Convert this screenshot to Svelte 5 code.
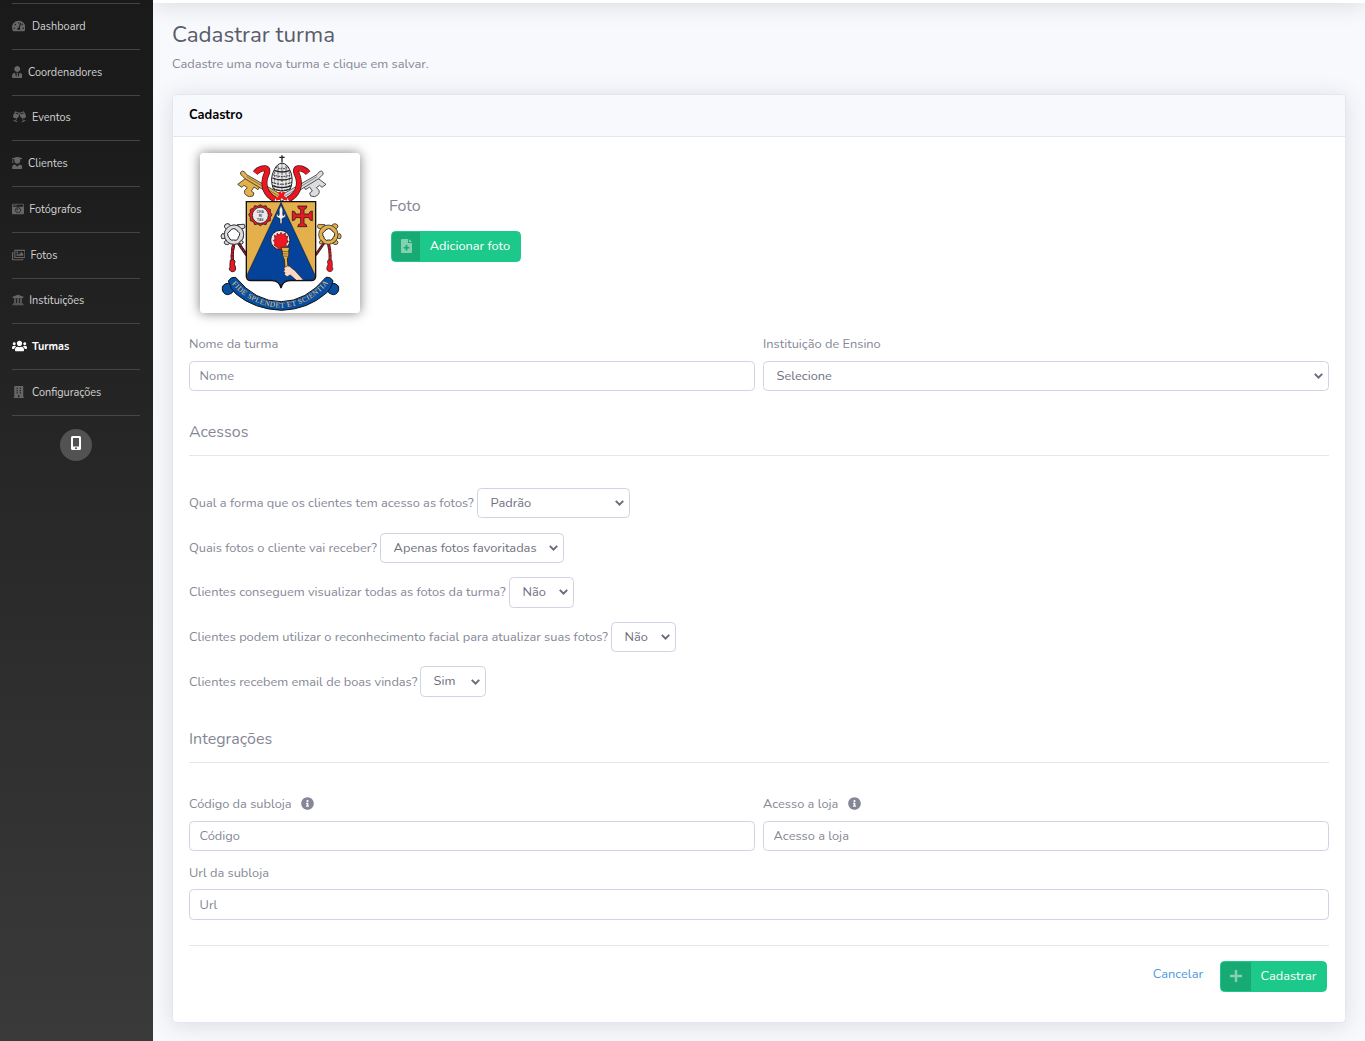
<script>
  const nav = [
    { label: 'Dashboard', icon: 'gauge', w: 13.5, slot: 20, box: '0 32 576 448' },
    { label: 'Coordenadores', icon: 'tie', w: 10.5, slot: 16, box: '0 0 448 512' },
    { label: 'Eventos', icon: 'cheers', w: 15, slot: 20, box: '20 20 600 490' },
    { label: 'Clientes', icon: 'graduate', w: 10.5, slot: 16, box: '0 0 448 512' },
    { label: 'Fotógrafos', icon: 'camera', w: 12, slot: 17.3, box: '0 32 512 448' },
    { label: 'Fotos', icon: 'images', w: 13.5, slot: 18.6, box: '0 32 576 448' },
    { label: 'Instituições', icon: 'bank', w: 12, slot: 17.3, box: '0 16 512 480' },
    { label: 'Turmas', icon: 'users', w: 15, slot: 20, box: '0 32 640 448', active: true },
    { label: 'Configurações', icon: 'building', w: 13.5, slot: 20, box: '0 0 576 512' }
  ];

  const paths = {
    gauge: 'M288 32C128.94 32 0 160.94 0 320c0 52.8 14.25 102.26 39.06 144.8 5.61 9.62 16.3 15.2 27.44 15.2h443c11.14 0 21.83-5.58 27.44-15.2C561.75 422.26 576 372.8 576 320c0-159.06-128.94-288-288-288zm0 64c14.71 0 26.58 10.13 30.32 23.65-1.11 2.26-2.64 4.23-3.45 6.67l-9.22 27.67c-5.13 3.49-10.97 6.01-17.64 6.01-17.67 0-32-14.33-32-32S270.33 96 288 96zM96 384c-17.67 0-32-14.33-32-32s14.33-32 32-32 32 14.33 32 32-14.33 32-32 32zm48-160c-17.67 0-32-14.33-32-32s14.33-32 32-32 32 14.33 32 32-14.33 32-32 32zm246.77-72.41l-61.33 184C343.13 347.33 352 364.54 352 384c0 11.72-3.38 22.55-8.88 32H232.88c-5.5-9.45-8.88-20.28-8.88-32 0-33.94 26.5-61.43 59.9-63.59l61.34-184.01c4.17-12.56 17.73-19.45 30.36-15.17 12.57 4.19 19.35 17.79 15.17 30.36zm14.66 57.2l15.52-46.55c3.47-1.29 7.13-2.23 11.05-2.23 17.67 0 32 14.33 32 32s-14.33 32-32 32c-11.38-.01-20.89-6.28-26.57-15.22zM480 384c-17.67 0-32-14.33-32-32s14.33-32 32-32 32 14.33 32 32-14.33 32-32 32z',
    tie: 'M224 256c70.7 0 128-57.3 128-128S294.7 0 224 0 96 57.3 96 128s57.3 128 128 128zm95.8 32.6L272 480l-32-136 32-56h-96l32 56-32 136-47.8-191.4C56.9 292 0 350.3 0 422.4V464c0 26.5 21.5 48 48 48h352c26.5 0 48-21.5 48-48v-41.6c0-72.1-56.9-130.4-128.2-133.8z',
    cheers: 'M140 30l165 62c15-28 15-28 30 0l165-62 88 190c-10 70-70 110-138 90l34 100 66-20c15 0 24 20 14 32l-136 58c-18 0-26-20-14-34l48-24-42-120c-60-20-84-70-82-120l-18-60-18 60c2 50-22 100-82 120l-42 120 48 24c12 14 4 34-14 34L76 422c-10-12-1-32 14-32l66 20 34-100c-68 20-128-20-138-90zM168 86l-16 36 124 46 14-36zm304 0l-122 46 14 36 124-46z',
    graduate: 'M319.4 320.6L224 416l-95.4-95.4C57.1 323.7 0 382.2 0 454.4v9.6c0 26.5 21.5 48 48 48h352c26.5 0 48-21.5 48-48v-9.6c0-72.2-57.1-130.7-128.6-133.8zM13.6 79.8l6.4 1.5v58.4c-7 4.2-12 11.5-12 20.3 0 8.4 4.6 15.4 11.1 19.7L3.5 242c-1.7 6.9 2.1 14 7.6 14h41.8c5.5 0 9.3-7.1 7.6-14l-15.6-62.3C51.4 175.4 56 168.4 56 160c0-8.8-5-16.1-12-20.3V87.1l66 15.9c-8.6 17.2-14 36.4-14 57 0 70.7 57.3 128 128 128s128-57.3 128-128c0-20.6-5.3-39.8-14-57l96.3-23.2c18.2-4.4 18.2-27.1 0-31.5l-190.4-46c-13-3.1-26.7-3.1-39.7 0L13.6 48.2c-18.1 4.4-18.1 27.1 0 31.6z',
    camera: 'M48 32C21.5 32 0 53.5 0 80v352c0 26.5 21.5 48 48 48h416c26.5 0 48-21.5 48-48V80c0-26.5-21.5-48-48-48H48zm0 32h106c3.3 0 6 2.7 6 6v20c0 3.3-2.7 6-6 6H38c-3.3 0-6-2.7-6-6V80c0-8.8 7.2-16 16-16zm426 96H38c-3.3 0-6-2.7-6-6v-36c0-3.3 2.7-6 6-6h138l30.2-45.3c1.1-1.7 3-2.7 5-2.7H464c8.8 0 16 7.2 16 16v74c0 3.3-2.7 6-6 6zM256 424c-66.2 0-120-53.8-120-120s53.8-120 120-120 120 53.8 120 120-53.8 120-120 120zm0-208c-48.5 0-88 39.5-88 88s39.5 88 88 88 88-39.5 88-88-39.5-88-88-88zm-48 104c-8.8 0-16-7.2-16-16 0-35.3 28.7-64 64-64 8.8 0 16 7.2 16 16s-7.2 16-16 16c-17.6 0-32 14.4-32 32 0 8.8-7.2 16-16 16z',
    images: 'M480 416v16c0 26.51-21.49 48-48 48H48c-26.51 0-48-21.49-48-48V176c0-26.51 21.49-48 48-48h16v48H54a6 6 0 0 0-6 6v244a6 6 0 0 0 6 6h372a6 6 0 0 0 6-6v-10h48zm42-336H150a6 6 0 0 0-6 6v244a6 6 0 0 0 6 6h372a6 6 0 0 0 6-6V86a6 6 0 0 0-6-6zm6-48c26.51 0 48 21.49 48 48v256c0 26.51-21.49 48-48 48H144c-26.51 0-48-21.49-48-48V80c0-26.51 21.49-48 48-48h384zM264 144c0 22.091-17.909 40-40 40s-40-17.909-40-40 17.909-40 40-40 40 17.909 40 40zm-72 96l39.515-39.515c4.686-4.686 12.284-4.686 16.971 0L288 240l103.515-103.515c4.686-4.686 12.284-4.686 16.971 0L480 208v80H192v-48z',
    bank: 'M496 128v16a8 8 0 0 1-8 8h-24v12c0 6.627-5.373 12-12 12H60c-6.627 0-12-5.373-12-12v-12H24a8 8 0 0 1-8-8v-16a8 8 0 0 1 4.941-7.392l232-88a7.996 7.996 0 0 1 6.118 0l232 88A8 8 0 0 1 496 128zm-24 304H40c-13.255 0-24 10.745-24 24v16a8 8 0 0 0 8 8h464a8 8 0 0 0 8-8v-16c0-13.255-10.745-24-24-24zM96 192v192H60c-6.627 0-12 5.373-12 12v20h416v-20c0-6.627-5.373-12-12-12h-36V192h-64v192h-64V192h-64v192h-64V192H96z',
    users: 'M96 224c35.3 0 64-28.7 64-64s-28.7-64-64-64-64 28.7-64 64 28.7 64 64 64zm448 0c35.3 0 64-28.7 64-64s-28.7-64-64-64-64 28.7-64 64 28.7 64 64 64zm32 32h-64c-17.6 0-33.5 7.1-45.1 18.6 40.3 22.1 68.9 62 75.1 109.4h66c17.7 0 32-14.3 32-32v-32c0-35.3-28.7-64-64-64zm-256 0c61.9 0 112-50.1 112-112S381.9 32 320 32 208 82.1 208 144s50.1 112 112 112zm76.8 32h-8.3c-20.8 10-43.9 16-68.5 16s-47.6-6-68.5-16h-8.3C179.6 288 128 339.6 128 403.2V432c0 26.5 21.5 48 48 48h288c26.5 0 48-21.5 48-48v-28.8c0-63.6-51.6-115.2-115.2-115.2zm-223.7-13.4C161.5 263.1 145.6 256 128 256H64c-35.3 0-64 28.7-64 64v32c0 17.7 14.3 32 32 32h65.9c6.3-47.4 34.9-87.3 75.2-109.4z',
    building: 'M500 480h-20V24c0-13-11-24-24-24H120c-13 0-24 11-24 24v456H76c-7 0-12 5-12 12v20h448v-20c0-7-5-12-12-12zM192 76h56v52h-56zm0 96h56v52h-56zm0 96h56v52h-56zm136-192h56v52h-56zm0 96h56v52h-56zm0 96h56v52h-56zM256 384h64v96h-64z',
    info: 'M256 8C119.043 8 8 119.083 8 256c0 136.997 111.043 248 248 248s248-111.003 248-248C504 119.083 392.957 8 256 8zm0 110c23.196 0 42 18.804 42 42s-18.804 42-42 42-42-18.804-42-42 18.804-42 42-42zm56 254c0 6.627-5.373 12-12 12h-88c-6.627 0-12-5.373-12-12v-24c0-6.627 5.373-12 12-12h12v-64h-12c-6.627 0-12-5.373-12-12v-24c0-6.627 5.373-12 12-12h64c6.627 0 12 5.373 12 12v100h12c6.627 0 12 5.373 12 12v24z'
  };

  const questions = [
    { text: 'Qual a forma que os clientes tem acesso as fotos?', value: 'Padrão', labelWidth: 288, width: 153 },
    { text: 'Quais fotos o cliente vai receber?', value: 'Apenas fotos favoritadas', labelWidth: 191, width: 184 },
    { text: 'Clientes conseguem visualizar todas as fotos da turma?', value: 'Não', labelWidth: 320, width: 65 },
    { text: 'Clientes podem utilizar o reconhecimento facial para atualizar suas fotos?', value: 'Não', labelWidth: 422, width: 65 },
    { text: 'Clientes recebem email de boas vindas?', value: 'Sim', labelWidth: 231, width: 66 }
  ];
</script>

{#snippet info()}
  <svg class="info" viewBox="0 0 512 512"><path d={paths.info} /></svg>
{/snippet}

{#snippet arrow()}
  <svg viewBox="0 0 9 6"><path d="M.8 .9L4.5 4.6 8.2 .9" /></svg>
{/snippet}

{#snippet key()}
  <g stroke="#333" stroke-width="2.5" stroke-linejoin="round">
    <path d="M170 98l-27 20 12 9 7-6 10 7-8 8q-4 14 14 19l11-2 3-9-8-6 8-12 12 8 8-13-24-17z" />
    <path d="M157 93q-8-4-5-11 4-7 11-2l7 9 115 66-8 14-112-68z" />
    <path d="M170 95l104 63" fill="none" stroke-width="1.5" />
  </g>
{/snippet}

{#snippet ring()}
  <g>
    <path d="M132 294q-8 30-4 58" fill="none" stroke="#222" stroke-width="9" />
    <path d="M132 294q-8 30-4 58" fill="none" stroke="#e2101c" stroke-width="6" stroke-dasharray="8 2" />
    <path d="M138 284l32 46" fill="none" stroke="#222" stroke-width="8" />
    <path d="M138 284l32 46" fill="none" stroke="#d5101c" stroke-width="4" stroke-dasharray="6 3" />
    <path d="M121 346q8-6 14 2l-2 10q8 17-1 21-11 4-14-8 4-4 2-11z" fill="#ed1822" stroke="#222" stroke-width="2" />
    <g stroke="#333" stroke-width="2.5">
      <path d="M142 239l20-1q5 6 1 11l-10 3zM103 246q0-9 9-10 8 0 10 8l-11 10zM97 266q-7 7-1 15l9-1v-12zM107 286q-7 6-2 11 7 5 14-2z" />
      <circle cx="132" cy="269" r="29" />
      <circle cx="154" cy="292" r="5" />
    </g>
    <path d="M124 253q8-5 15 1 1 4 5 5 8 5 4 13-4 4-4 9-5 8-13 4-6 2-11-2-3-7-6-10-4-8 3-13 5-2 7-7z" fill="#fff" stroke="#222" stroke-width="3" />
  </g>
{/snippet}

<div class="page">
  <aside>
    <nav>
      {#each nav as item}
        <a class="item" class:active={item.active} href="#top">
          <span class="slot" style:width="{item.slot}px">
            <svg width={item.w} height="12" viewBox={item.box}><path fill-rule="evenodd" d={paths[item.icon]} /></svg>
          </span>
          <span>{item.label}</span>
        </a>
      {/each}
    </nav>
    <button class="phone" aria-label="App">
      <svg width="10" height="14" viewBox="0 0 10 14"><path fill="#fff" fill-rule="evenodd" d="M1.5 0h7Q10 0 10 1.5v11Q10 14 8.5 14h-7Q0 14 0 12.5v-11Q0 0 1.5 0zM2 2v8.5h6V2zM5 11.2a1 1 0 1 0 0 2 1 1 0 1 0 0-2z" /></svg>
    </button>
  </aside>

  <div class="main">
    <div class="topbar"></div>
    <main>
      <h1>Cadastrar turma</h1>
      <p class="sub">Cadastre uma nova turma e clique em salvar.</p>

      <section class="card">
        <header>Cadastro</header>
        <div class="body">
          <div class="photo-row">
            <svg class="crest" viewBox="30 24 480 480">
              <rect x="30" y="24" width="480" height="480" fill="#fff" />
              <g fill="#e4b04c">{@render key()}</g>
              <g fill="#dcdde0" transform="translate(551 0) scale(-1 1)">{@render key()}</g>
              <g fill="none" stroke-linejoin="round">
                <path d="M196 84q12-15 31-14 8 2 3 16-12 24-3 48 7 18 28 29M354 84q-12-15-31-14-8 2-3 16 12 24 3 48-7 18-28 29" stroke="#222" stroke-width="18" />
                <path d="M196 84q12-15 31-14 8 2 3 16-12 24-3 48 7 18 28 29M354 84q-12-15-31-14-8 2-3 16 12 24 3 48-7 18-28 29" stroke="#ee1420" stroke-width="14" />
                <path d="M258 163q18-4 24-22M292 163q-18-4-24-22" stroke="#ee1420" stroke-width="9" />
              </g>
              <path d="M250 132q-12-32 3-58 8-18 23-20 15 2 23 20 14 26 2 58-25 12-51 0z" fill="#e6e6e9" stroke="#222" stroke-width="3" />
              <g fill="none" stroke="#222" stroke-width="3">
                <path d="M276 52V31M268 37h16" stroke-width="4" />
                <path d="M253 76q24 10 46 0M247 99q30 12 58 0M247 122q29 12 58 0" stroke-width="4" />
                <path d="M256 67q20 9 39 0M249 89q28 11 54 0M246 112q30 12 60 0M250 130q26 12 51 0" stroke-dasharray="5 3" />
                <path d="M276 54v82M264 62v72M288 62v72M254 80v50M298 80v50" stroke-width="2" stroke-dasharray="7 3" />
              </g>
              {@render ring()}
              <g fill="#dcdde0">{@render ring()}</g>
              <g fill="#e4b04c" transform="translate(547 0) scale(-1 1)">{@render ring()}</g>
              <path d="M169 170h208v224q0 13-14 13h-63q-22 1-27 22-5-21-27-22h-63q-14 0-14-13z" fill="#e4b04c" />
              <path d="M273 172L172 388q-2 17 11 17h63q22 2 27 20 5-18 27-20h63q14 0 11-17z" fill="#05429a" stroke="#111" stroke-width="1.5" />
              <path d="M273 180q8 14 5 28l2 5q4-9 7-4 1 7-6 9l-5 3v11l-3 8-3-8v-11l-5-3q-7-2-6-9 3-5 7 4l2-5q-3-14 5-28z" fill="#f2f2f2" stroke="#111" stroke-width="1.5" />
              <g fill="#ed1822" stroke="#222" stroke-width="2.5">
                <path d="M211 179l8 5 9-2 4 8 9 3 0 9 5 7-5 8 0 10-9 3-4 9-9-2-8 5-8-5-9 2-4-9-9-3 0-10-5-8 5-7 0-9 9-3 4-8 9 2z" />
                <circle cx="211" cy="211" r="24" fill="#e9e9ec" />
                <path d="M323 183h28l-3 8-6 2v14h15l3-7 7-2v29l-7-2-3-7h-15v18l6 2 3 7h-28l3-7 6-2v-18h-15l-3 7-7 2v-29l7 2 3 7h15v-14l-6-2z" />
              </g>
              <g class="motto"><text x="211" y="203">CHA</text><text x="211" y="215">RI</text><text x="211" y="227">TAS</text></g>
              <circle cx="271" cy="285" r="29" fill="#e4e7ed" stroke="#222" stroke-width="3" />
              <path d="M253 270l7 5 1-10 7 5 5-8 5 7 8-5v9l8 1-3 9 4 8-7 4 1 10-7 3-6 5h-8l-8-7-8-5 3-7-5-8 5-3z" fill="#ed1822" stroke="#611" stroke-width="2" />
              <path d="M273 307h26l-3 10q3 14-4 25l3 35-9 2-3-36q-8-11-6-23z" fill="#e4b04c" stroke="#222" stroke-width="2.5" />
              <path d="M276 319l18 1M277 326l16 1M279 333l14 1" stroke="#222" stroke-width="1.5" />
              <path d="M284 367q8-7 15-3 8 8 15 12l27 30h-22l-18-16-10 5-8-6 2-6-5-4 4-4q-4-5 0-8z" fill="#fcd9c4" stroke="#222" stroke-width="2" />
              <path d="M169 170h208v224q0 13-14 13h-63q-22 1-27 22-5-21-27-22h-63q-14 0-14-13z" fill="none" stroke="#111" stroke-width="4" />
              <g fill="#074fa3" stroke="#111" stroke-width="3" stroke-linejoin="round">
                <path d="M125 416q-21-5-28 10-2 20 15 23 16-1 24-20z" />
                <path d="M418 416q21-5 28 10 2 20-15 23-16-1-24-20z" />
                <path d="M115 408q8-14 22-11 58 73 137 73 74-1 134-73 14-2 21 11-6 25-20 36-55 49-134 52-83-3-138-50-15-14-22-38z" />
              </g>
              <path id="ribbon" d="M123 414Q182 484 273 488Q363 483 420 407" fill="none" />
              <text class="ribbon-text"><textPath href="#ribbon" startOffset="3" textLength="334">FIDE SPLENDET ET SCIENTIA</textPath></text>
            </svg>
            <div class="photo-side">
              <h2>Foto</h2>
              <button class="btn add">
                <span class="btn-icon"><svg width="11" height="14" viewBox="0 0 11 14"><path fill-rule="evenodd" d="M1 0h6v4h4v9q0 1-1 1H1q-1 0-1-1V1q0-1 1-1zM4.6 6v1.9H2.7v1.7h1.9v1.9h1.8V9.6h1.9V7.9H6.4V6zM8 0l3 3H8z" /></svg></span>
                <span class="btn-text">Adicionar foto</span>
              </button>
            </div>
          </div>

          <div class="grid first">
            <div class="field"><label for="nome">Nome da turma</label><input id="nome" placeholder="Nome" /></div>
            <div class="field">
              <label for="inst">Instituição de Ensino</label>
              <div class="select"><select id="inst"><option>Selecione</option></select>{@render arrow()}</div>
            </div>
          </div>

          <h2 class="group">Acessos</h2>
          <div class="questions">
            {#each questions as q}
              <div class="question">
                <span class="q-text" style:width="{q.labelWidth}px">{q.text}</span>
                <div class="select" style:width="{q.width}px"><select aria-label={q.text}><option>{q.value}</option></select>{@render arrow()}</div>
              </div>
            {/each}
          </div>

          <h2 class="group integ">Integrações</h2>
          <div class="grid second">
            <div class="field"><label for="cod"><span>Código da subloja</span>{@render info()}</label><input id="cod" placeholder="Código" /></div>
            <div class="field"><label for="loja"><span>Acesso a loja</span>{@render info()}</label><input id="loja" placeholder="Acesso a loja" /></div>
          </div>
          <div class="field url"><label for="url"><span>Url da subloja</span></label><input id="url" placeholder="Url" /></div>

          <footer>
            <a href="#top">Cancelar</a>
            <button class="btn save">
              <span class="btn-icon"><svg width="12" height="12" viewBox="0 0 12 12"><path d="M4.8 0h2.4v4.8H12v2.4H7.2V12H4.8V7.2H0V4.8h4.8z" /></svg></span>
              <span class="btn-text">Cadastrar</span>
            </button>
          </footer>
        </div>
      </section>
    </main>
  </div>
</div>

<style>
  :global(body) { overflow: hidden; }
  .page, .page :global(*) { box-sizing: border-box; }
  .page {
    display: flex;
    height: 1041px;
    overflow: hidden;
    background: #f8f9fc;
    font-family: Nunito, Lato, "Open Sans", sans-serif;
    font-size: 12.8px;
    line-height: 19.2px;
    color: #858796;
  }
  a { text-decoration: none; }
  button, input, select { font: inherit; letter-spacing: inherit; }

  aside {
    flex: none;
    width: 153px;
    padding: 3px 13px 0 12px;
    background: linear-gradient(180deg, #1a1a1a 0%, #1b1b1b 12%, #3a3a3a 100%);
    position: relative;
    z-index: 2;
  }
  nav { border-bottom: 1px solid #474747; height: 412.75px; }
  .item {
    display: flex;
    align-items: center;
    height: 45.75px;
    border-top: 1px solid #444;
    color: #d4d4d4;
    font-size: 10.88px;
  }
  .item .slot { display: flex; flex: none; margin-top: -1px; }
  .item svg { fill: #666; display: block; margin-left: -.4px; }
  .item.active { color: #fff; font-weight: 700; }
  .item.active svg { fill: #fff; }
  .phone {
    display: flex;
    justify-content: center;
    width: 32px;
    height: 32px;
    margin: 13.25px auto 0 48px;
    padding: 7px 0 0;
    border: 0;
    border-radius: 50%;
    background: #525252;
  }

  .main { flex: 1; min-width: 0; }
  .topbar { height: 56px; margin-top: -53px; background: #fff; box-shadow: 0 2.4px 22.4px rgba(58, 59, 69, .15); }
  main { padding: 18px 19px 0; }
  h1 { margin: 0; font-size: 22.4px; line-height: 27px; font-weight: 400; color: #5a5c69; }
  .sub { margin: 7px 0 20px; }
  .card {
    height: 929px;
    border: 1px solid #e3e6f0;
    border-radius: 4.5px;
    background: #fff;
    box-shadow: 0 2.4px 22.4px rgba(58, 59, 69, .15);
  }
  header {
    height: 42px;
    padding: 10.5px 16px;
    border-bottom: 1px solid #e3e6f0;
    border-radius: 4px 4px 0 0;
    background: #f8f9fc;
    color: #000;
    font-weight: 700;
  }
  .body { padding: 16px; }
  .photo-row { display: flex; height: 160px; padding-left: 11px; }
  .crest { width: 160px; height: 160px; flex: none; border-radius: 4px; box-shadow: 0 0 12px rgba(0, 0, 0, .5); }
  .motto { font: 700 10px "Liberation Sans", sans-serif; fill: #444; text-anchor: middle; }
  .ribbon-text { font: 400 22px "Liberation Serif", serif; fill: #edcb78; }
  .photo-side { padding: 44px 0 0 29px; }
  h2 { margin: 0; font-size: 16px; line-height: 19px; font-weight: 400; }
  .btn {
    display: flex;
    height: 31px;
    padding: 0;
    border: 1px solid #1cc88a;
    border-radius: 4.5px;
    overflow: hidden;
    background: #1cc88a;
    color: #fff;
  }
  .btn-icon { display: flex; align-items: center; justify-content: center; width: 28px; height: 29px; background: #18aa75; }
  .btn-icon svg { fill: #86d0b2; margin-top: -2px; }
  .btn-text { flex: 1; line-height: 28px; text-align: center; }
  .add { width: 130px; margin: 15px 0 0 2px; }

  .grid { display: grid; grid-template-columns: 1fr 1fr; column-gap: 8px; }
  .first { margin-top: 21px; }
  .first label { padding-top: 1px; height: 20px; margin-bottom: 7px; }
  .field { display: flex; flex-direction: column; }
  label { display: flex; align-items: center; height: 19px; margin-bottom: 8px; }
  label span { padding-top: 2.5px; }
  input, .select {
    width: 100%;
    height: 30px;
    border: 1px solid #d1d3e2;
    border-radius: 4.5px;
    background: #fff;
  }
  input { padding: 0 9.6px; color: #6e707e; outline: 0; }
  input::placeholder { color: #858796; opacity: 1; }
  .select { display: grid; align-items: center; flex: none; }
  select {
    grid-area: 1 / 1;
    width: 100%;
    height: 28px;
    padding: 1px 0 0 12.6px;
    border: 0;
    background: none;
    appearance: none;
    color: #6e707e;
  }
  .select svg { grid-area: 1 / 1; justify-self: end; width: 9px; height: 6px; margin-right: 4.6px; pointer-events: none; }
  .select path { fill: none; stroke: #6a6c7a; stroke-width: 2; }

  .group { height: 35px; padding-top: 2px; margin-top: 30px; border-bottom: 1px solid #e6e6e8; }
  .questions { display: flex; flex-direction: column; gap: 14.2px; margin-top: 31.9px; }
  .question { display: flex; align-items: center; height: 30.4px; }
  .question .select { height: 30.4px; }
  .q-text { flex: none; padding-top: 1px; white-space: nowrap; }
  .integ { margin-top: 31.3px; }
  .second { margin-top: 31px; }
  .info { width: 13px; height: 13px; margin-left: 9.5px; fill: #858796; }
  .url { margin-top: 12px; }
  .url label { margin-bottom: 7px; }
  .url input { height: 31px; padding-top: 1px; }
  footer {
    display: flex;
    justify-content: flex-end;
    margin-top: 25px;
    padding: 15px 2px 0 0;
    border-top: 1px solid #e6e6e8;
  }
  footer a { margin: 4px 17px 0 0; color: #4a98e0; }
  .save { width: 107px; }
  .save .btn-icon { width: 30px; }
</style>
